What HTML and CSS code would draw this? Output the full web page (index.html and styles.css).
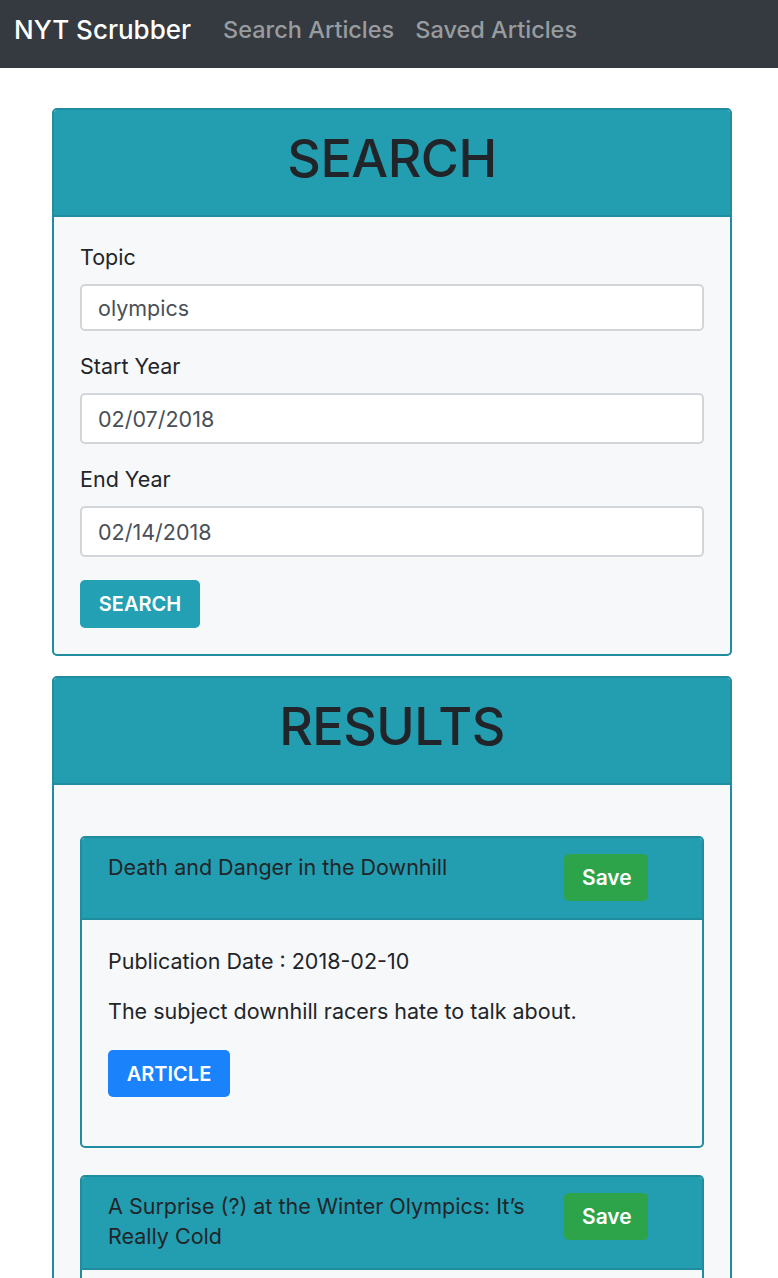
FILE: index.html
```html
<!DOCTYPE html>
<html lang="en">
<head>
<meta charset="utf-8">
<title>NYT Scrubber</title>
<link rel="stylesheet" href="styles.css">
</head>
<body>
<nav class="navbar">
  <a class="brand" href="#">NYT Scrubber</a>
  <a class="nav-link" href="#">Search Articles</a>
  <a class="nav-link" href="#">Saved Articles</a>
</nav>
<main class="container">
  <section class="card">
    <header class="card-header"><h1>SEARCH</h1></header>
    <form class="card-body">
      <div class="form-group">
        <label>Topic</label>
        <div class="input">olympics</div>
      </div>
      <div class="form-group">
        <label>Start Year</label>
        <div class="input date">02/07/2018</div>
      </div>
      <div class="form-group">
        <label>End Year</label>
        <div class="input date">02/14/2018</div>
      </div>
      <button type="button" class="btn btn-search">SEARCH</button>
    </form>
  </section>

  <section class="card">
    <header class="card-header"><h1>RESULTS</h1></header>
    <div class="card-body results">
      <article class="result">
        <div class="result-header">
          <div class="result-title">Death and Danger in the Downhill</div>
          <button type="button" class="btn btn-save">Save</button>
        </div>
        <div class="result-body">
          <p>Publication Date : 2018-02-10</p>
          <p>The subject downhill racers hate to talk about.</p>
          <button type="button" class="btn btn-article">ARTICLE</button>
        </div>
      </article>
      <article class="result">
        <div class="result-header">
          <div class="result-title">A Surprise (?) at the Winter Olympics: It’s Really Cold</div>
          <button type="button" class="btn btn-save">Save</button>
        </div>
        <div class="result-body">
          <p>Publication Date : 2018-02-11</p>
          <p>Temperatures in Pyeongchang have been brutal.</p>
          <button type="button" class="btn btn-article">ARTICLE</button>
        </div>
      </article>
    </div>
  </section>
</main>
</body>
</html>
```
FILE: styles.css
```css
* { box-sizing: border-box; }
html, body { margin: 0; padding: 0; }
body {
  font-family: "Inter", "Liberation Sans", sans-serif;
  font-size: 21.5px;
  color: #212529;
  background: #ffffff;
}
.navbar {
  height: 68px;
  background: #343a40;
  display: flex;
  align-items: center;
  padding: 0 14px 10px;
  gap: 21px;
}
.brand {
  color: #ffffff;
  text-decoration: none;
  font-size: 26px;
  font-weight: 500;
  margin-right: 11px;
}
.nav-link {
  color: #999c9f;
  text-decoration: none;
  font-size: 23.5px;
  font-weight: 500;
}
.container {
  width: 680px;
  margin-left: 52px;
  padding-top: 40px;
  display: flex;
  flex-direction: column;
  gap: 20px;
}
.card {
  border: 2px solid #1f8d9f;
  border-radius: 5px;
  background: #f7f8fa;
  overflow: hidden;
}
.card-header {
  height: 107px;
  background: #239db0;
  border-bottom: 2px solid #1f8d9f;
  display: flex;
  align-items: center;
  justify-content: center;
  padding-bottom: 8px;
}
.card-header h1 {
  margin: 0;
  font-size: 52px;
  font-weight: 500;
  color: #212529;
  letter-spacing: -0.5px;
}
.card-body {
  padding: 25px 26px 26px;
  display: flex;
  flex-direction: column;
}
.form-group { margin-bottom: 20px; }
.form-group label {
  display: block;
  line-height: 30px;
  margin-bottom: 12px;
}
.input {
  height: 47px;
  border: 2px solid #d2d5d9;
  border-radius: 5px;
  background: #ffffff;
  padding: 0 16px;
  display: flex;
  align-items: center;
  color: #495057;
}
.input.date { height: 51px; }
.btn {
  border: none;
  border-radius: 5px;
  color: #ffffff;
  font-family: inherit;
  font-weight: 600;
  font-size: 20px;
  height: 48px;
  padding: 0 18px;
  cursor: pointer;
}
.btn-search {
  background: #24a0b5;
  width: 120px;
  margin-top: 3px;
  align-self: flex-start;
}
.results { gap: 27px; }
.result {
  border: 2px solid #1f8d9f;
  border-radius: 5px;
  overflow: hidden;
  background: #f7f8fa;
}
.results .result:first-child { margin-top: 26px; }
.result-header {
  background: #239db0;
  border-bottom: 2px solid #1f8d9f;
  padding: 16px 54px 17px 26px;
  display: flex;
  align-items: flex-start;
  justify-content: space-between;
}
.result-title {
  width: 440px;
  line-height: 30px;
  margin-top: -2px;
}
.btn-save {
  background: #2ea44a;
  width: 84px;
  height: 47px;
  font-size: 21px;
}
.result-body {
  padding: 26px 26px 49px;
}
.result-body p {
  margin: 0 0 20px;
  line-height: 30px;
}
.btn-article {
  background: #1a82fb;
  width: 122px;
  height: 47px;
  margin-top: 4px;
}
```
